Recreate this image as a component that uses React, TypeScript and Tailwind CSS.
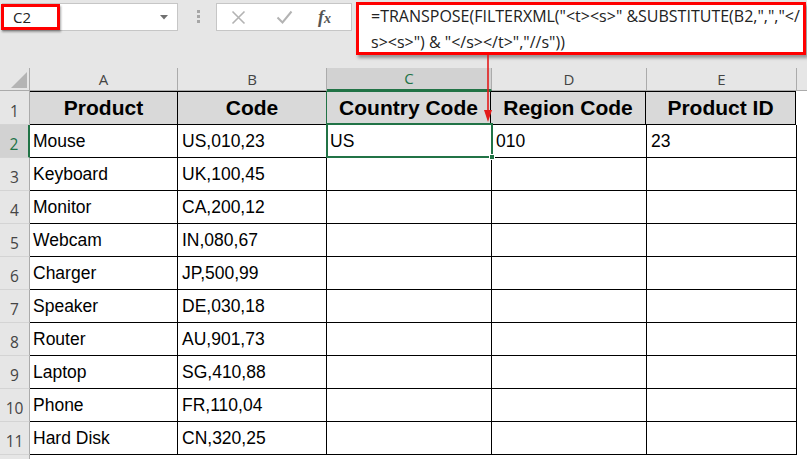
import React from "react";

const ROWS: [string, string][] = [
  ["Mouse", "US,010,23"],
  ["Keyboard", "UK,100,45"],
  ["Monitor", "CA,200,12"],
  ["Webcam", "IN,080,67"],
  ["Charger", "JP,500,99"],
  ["Speaker", "DE,030,18"],
  ["Router", "AU,901,73"],
  ["Laptop", "SG,410,88"],
  ["Phone", "FR,110,04"],
  ["Hard Disk", "CN,320,25"],
];

const COLS = [
  { key: "A", w: "w-[148px]", title: "Product" },
  { key: "B", w: "w-[149px]", title: "Code" },
  { key: "C", w: "w-[165px]", title: "Country Code" },
  { key: "D", w: "w-[155px]", title: "Region Code" },
  { key: "E", w: "w-[150px]", title: "Product ID" },
];

const ui = { fontFamily: '"Open Sans", "Noto Sans", sans-serif' };
const cellFont = { fontFamily: '"Liberation Sans", Arial, sans-serif' };

function Toolbar() {
  return (
    <div className="relative h-[68px] bg-[#e6e6e6] flex items-start">
      {/* name box */}
      <div className="ml-[2px] mt-[3px] w-[176px] h-[28px] bg-white border border-[#c6c6c6] flex items-center justify-between pl-[10px] pr-[9px]">
        <span className="text-[15px] text-[#222]" style={ui}>C2</span>
        <svg width="8" height="5" viewBox="0 0 8 5"><path d="M0 0h8L4 4.5z" fill="#707070" /></svg>
      </div>
      {/* red highlight round name box */}
      <div className="absolute left-[1px] top-[4px] w-[59px] h-[26px] border-[3px] border-[#ff0000] shadow-[1px_2px_2px_rgba(0,0,0,0.35)]" />

      {/* grip dots */}
      <div className="ml-[19px] mt-[10px] flex flex-col gap-[2px]">
        <span className="w-[3px] h-[3px] bg-[#a6a6a6]" />
        <span className="w-[3px] h-[3px] bg-[#a6a6a6]" />
        <span className="w-[3px] h-[3px] bg-[#a6a6a6]" />
      </div>

      {/* cancel / enter / fx */}
      <div className="ml-[16px] mt-[3px] w-[136px] h-[28px] bg-white border border-[#c6c6c6] flex items-center">
        <svg className="ml-[14px]" width="15" height="15" viewBox="0 0 15 15">
          <path d="M1.5 1.5l12 12M13.5 1.5l-12 12" stroke="#b3b3b3" strokeWidth="1.6" fill="none" />
        </svg>
        <svg className="ml-[30px]" width="17" height="14" viewBox="0 0 17 14">
          <path d="M1.5 7.5l5 5L15.5 1.5" stroke="#b3b3b3" strokeWidth="2" fill="none" />
        </svg>
        <span className="ml-[25px] text-[18px] italic font-bold text-[#555]" style={{ fontFamily: '"Liberation Serif", "Times New Roman", serif' }}>
          f<span className="text-[14px]">x</span>
        </span>
      </div>

      {/* formula box */}
      <div className="ml-[4px] mt-[2px] w-[450px] h-[53px] bg-white border-[3px] border-[#ff0000] shadow-[2px_3px_3px_rgba(0,0,0,0.35)] pl-[12px] text-[16px] leading-[26px] text-[#222] whitespace-nowrap" style={ui}>
        <div className="-mt-[2px]">
          =TRANSPOSE(FILTERXML("&lt;t&gt;&lt;s&gt;" &amp;SUBSTITUTE(B2,",","&lt;/
        </div>
        <div>s&gt;&lt;s&gt;") &amp; "&lt;/s&gt;&lt;/t&gt;","//s"))</div>
      </div>
    </div>
  );
}

function ColumnHeaders() {
  return (
    <div className="flex h-[23px] bg-[#e6e6e6]" style={ui}>
      <div className="relative w-[30px] border-r border-b border-[#ababab]">
        <svg className="absolute right-[2px] bottom-[2px]" width="16" height="16" viewBox="0 0 16 16">
          <path d="M16 0V16H0z" fill="#b4b4b4" />
        </svg>
      </div>
      {COLS.map(c => (
        <div key={c.key}
          className={`${c.w} flex items-center justify-center text-[15px] border-r border-b ${c.key === "C" ? "bg-[#d2d2d2] text-[#217346] border-r-[#ababab] border-b-2 border-b-[#217346]" : "text-[#444] border-[#ababab]"}`}>
          {c.key}
        </div>
      ))}
      <div className="flex-1 border-b border-[#ababab]" />
    </div>
  );
}

function RowHeader({ n, selected, tall }: { n?: number; selected?: boolean; tall?: boolean }) {
  return (
    <div
      className={`w-[30px] ${tall ? "h-[34px]" : "h-[33px]"} flex items-end justify-center pb-[1px] text-[15.5px] border-b border-[#d4d4d4] ${selected ? "bg-[#d2d2d2] text-[#217346] border-r-2 border-r-[#217346]" : "bg-[#e6e6e6] text-[#444] border-r border-r-[#ababab]"}`}
      style={ui}>
      {n}
    </div>
  );
}

export default function App() {
  return (
    <div className="relative w-[807px] h-[459px] overflow-hidden bg-white">
      <Toolbar />
      <ColumnHeaders />

      {/* row 1: table header */}
      <div className="flex">
        <RowHeader n={1} tall />
        {COLS.map(c => (
          <div key={c.key}
            className={`${c.w} h-[34px] flex items-center justify-center bg-[#d9d9d9] border-t border-b border-r border-black text-[21px] font-bold text-black ${c.key === "C" ? "border-t-[#217346] border-l border-l-[#217346] -ml-px" : ""}`}
            style={cellFont}>
            {c.title}
          </div>
        ))}
        <div className="flex-1" />
      </div>

      {/* data rows */}
      {ROWS.map(([product, code], i) => (
        <div key={product} className="flex">
          <RowHeader n={i + 2} selected={i === 0} />
          <div className="w-[148px] h-[33px] flex items-center pl-[3px] pt-px border-b border-r border-black text-[17.5px]" style={cellFont}>{product}</div>
          <div className="w-[149px] h-[33px] flex items-center pl-[4px] pt-px border-b border-r border-black text-[17.5px]" style={cellFont}>{code}</div>
          <div className="w-[165px] h-[33px] flex items-center pl-[3px] pt-px border-b border-r border-black text-[17.5px]" style={cellFont}>{i === 0 ? "US" : ""}</div>
          <div className="w-[155px] h-[33px] flex items-center pl-[4px] pt-px border-b border-r border-black text-[17.5px]" style={cellFont}>{i === 0 ? "010" : ""}</div>
          <div className="w-[150px] h-[33px] flex items-center pl-[4px] pt-px border-b border-r border-black text-[17.5px]" style={cellFont}>{i === 0 ? "23" : ""}</div>
          <div className="flex-1" />
        </div>
      ))}

      {/* row 12, partly visible */}
      <div className="flex">
        <RowHeader />
        <div className="flex-1" />
      </div>

      {/* active cell C2 */}
      <div className="absolute left-[326px] top-[123px] w-[167px] h-[35px] border-2 border-[#217346]" />
      <div className="absolute left-[489px] top-[154px] w-[6px] h-[6px] bg-[#217346] border border-white" />

      {/* callout arrow */}
      <svg className="absolute left-[482px] top-[55px]" width="12" height="70" viewBox="0 0 12 70">
        <path d="M6 0V58" stroke="#e31b1b" strokeWidth="1.6" />
        <path d="M2 55L10 55L6 67z" fill="#e31b1b" />
      </svg>
    </div>
  );
}
